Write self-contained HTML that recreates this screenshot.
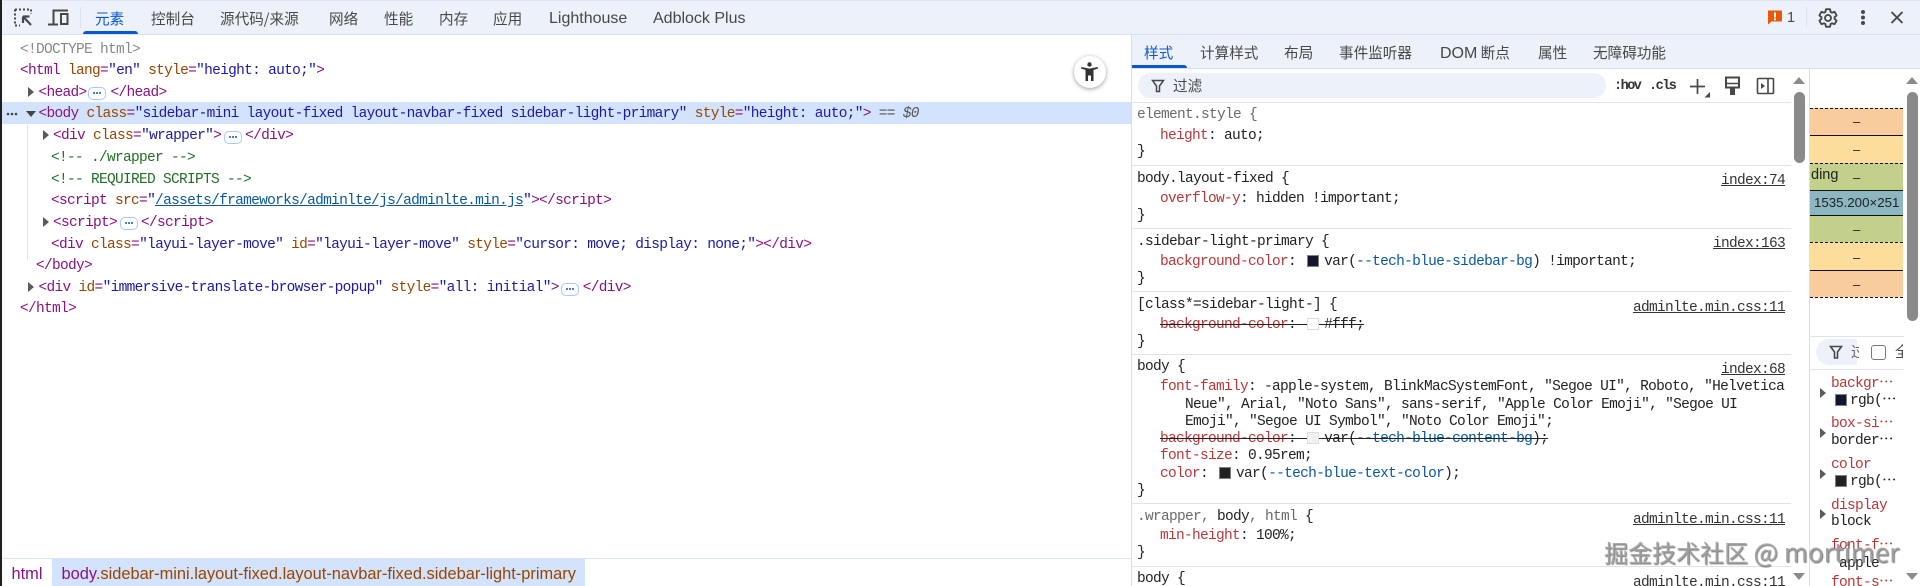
<!DOCTYPE html>
<html lang="zh"><head><meta charset="utf-8"><title>DevTools</title>
<style>
html,body{margin:0;padding:0;background:#fff;width:1920px;height:586px;overflow:hidden}
#r{position:relative;width:1920px;height:586px;overflow:hidden;background:#fff}
.l,.u{position:absolute;white-space:pre;line-height:20px;height:20px;font-family:"Liberation Mono","Noto Sans CJK SC",monospace;font-size:14.5px;letter-spacing:-.7px;color:#222;margin-top:1.5px}
.u{margin-top:1px}
.s{position:absolute;white-space:pre;line-height:20px;height:20px;font-family:"Noto Sans CJK SC","Liberation Sans",sans-serif;font-size:14.6px;color:#474747}
.b{position:absolute}
.t{color:#881280}.a{color:#994500}.v{color:#1a1aa6}.c{color:#236e25}
.p{color:#b8383a}.g{color:#6a6a6a}.n{color:#0b57a0}
.u{text-decoration:underline;color:#333;text-align:right}
.dl{position:absolute;width:16px;height:11px;border:1px solid #a8c7fa;border-radius:5px;background:#fff}
.dl:after{content:"";position:absolute;left:4px;top:4px;width:2px;height:2px;background:#1a56b0;border-radius:50%;box-shadow:3px 0 0 #1a56b0,6px 0 0 #1a56b0}
.ar{position:absolute;width:0;height:0;border-left:6px solid #5a5a5a;border-top:5px solid transparent;border-bottom:5px solid transparent}
.sw{position:absolute;width:10px;height:10px;border:1px solid #808080}
.h{position:absolute;left:1132px;width:659px;height:1px;background:#dde3f2}
.bx{position:absolute;left:1810px;width:93px}
.dash{position:absolute;left:1810px;width:93px;height:0;border-top:1px dashed #111}
.sol{position:absolute;left:1810px;width:93px;height:1px;background:#111}
.m{position:absolute;left:1853px;white-space:pre;font:13px/16px "Liberation Sans",sans-serif;color:#222}
.i{position:absolute;overflow:visible}
.e{letter-spacing:3.3px}
.ls{font-family:"Liberation Sans",sans-serif;font-size:16px}
</style></head><body><div id="r">

<!-- toolbar -->
<div class="b" style="left:0;top:0;width:1920px;height:34px;background:#edf2fa"></div>
<div class="b" style="left:0;top:0;width:1920px;height:1px;background:#dfe5f2"></div>
<div class="b" style="left:0;top:34px;width:1920px;height:1px;background:#d6dfee"></div>
<div class="b" style="left:80px;top:7px;width:1px;height:21px;background:#dde3ee"></div>
<div class="b" style="left:1806px;top:7px;width:1px;height:21px;background:#dde3ee"></div>

<svg class="i" style="left:0;top:0" width="90" height="34" fill="none" stroke="#474747">
<path d="M15 9.5H31M15 9.5V25.5H20M31 9.5V14" stroke-width="2" stroke-dasharray="2 2"/>
<path d="M23 16.5H29.5M23 16.5V23M23.5 17L31 25" stroke-width="2.2"/>
<path d="M53.5 24V10.5H68" stroke-width="2"/><path d="M48 24.5H58" stroke-width="2"/>
<rect x="61" y="14" width="6.5" height="10" stroke-width="2"/>
</svg>

<div class="s" style="left:95px;top:9px;color:#0b57d0">元素</div>
<div class="b" style="left:83px;top:31px;width:55px;height:3px;background:#0b57d0;border-radius:3px 3px 0 0"></div>
<div class="s" style="left:151px;top:9px">控制台</div>
<div class="s" style="left:220px;top:9px">源代码/来源</div>
<div class="s" style="left:329px;top:9px">网络</div>
<div class="s" style="left:384px;top:9px">性能</div>
<div class="s" style="left:439px;top:9px">内存</div>
<div class="s" style="left:493px;top:9px">应用</div>
<div class="s ls" style="left:549px;top:9px">Lighthouse</div>
<div class="s ls" style="left:653px;top:9px">Adblock Plus</div>

<svg class="i" style="left:1760px;top:0" width="160" height="34" fill="none">
<path d="M8 10.5H22V21.5H11.5L8 24.5Z" fill="#e8590c"/>
<rect x="14" y="12.5" width="2" height="5" fill="#fff"/><rect x="14" y="18.5" width="2" height="1.8" fill="#fff"/>
</svg>
<div class="s" style="left:1787px;top:8px;font-family:'Liberation Sans',sans-serif;font-size:14.5px">1</div>
<svg class="i" style="left:1817px;top:6.5px" width="22" height="22" viewBox="0 0 24 24" fill="none" stroke="#474747" stroke-width="2"><path d="M19.14 12.94c.04-.3.06-.61.06-.94 0-.32-.02-.64-.07-.94l2.03-1.58a.49.49 0 0 0 .12-.61l-1.92-3.32a.488.488 0 0 0-.59-.22l-2.39.96c-.5-.38-1.03-.7-1.62-.94l-.36-2.54a.484.484 0 0 0-.48-.41h-3.84c-.24 0-.43.17-.47.41l-.36 2.54c-.59.24-1.13.57-1.62.94l-2.39-.96c-.22-.08-.47 0-.59.22L2.74 8.87c-.12.21-.08.47.12.61l2.03 1.58c-.05.3-.09.63-.09.94s.02.64.07.94l-2.03 1.58a.49.49 0 0 0-.12.61l1.92 3.32c.12.22.37.29.59.22l2.39-.96c.5.38 1.03.7 1.62.94l.36 2.54c.05.24.24.41.48.41h3.84c.24 0 .44-.17.47-.41l.36-2.54c.59-.24 1.13-.56 1.62-.94l2.39.96c.22.08.47 0 .59-.22l1.92-3.32c.12-.22.07-.47-.12-.61l-2.01-1.58z"/><circle cx="12" cy="12" r="3.3"/></svg>
<svg class="i" style="left:1855px;top:5px" width="55" height="26" fill="#474747" stroke="#474747">
<circle cx="8" cy="7" r="2" stroke="none"/><circle cx="8" cy="12.5" r="2" stroke="none"/><circle cx="8" cy="18" r="2" stroke="none"/>
<path d="M36.5 7L47.5 18M47.5 7L36.5 18" stroke-width="1.9" fill="none"/>
</svg>

<!-- DOM panel -->
<div class="b" style="left:2px;top:102px;width:1129px;height:22px;background:#d3e3fd"></div>
<div class="b" style="left:27px;top:125px;width:1px;height:135px;background:#e4e4e4"></div>

<div class="l" style="left:20px;top:38px;color:#888">&lt;!DOCTYPE html&gt;</div>
<div class="l" style="left:20px;top:59px"><span class="t">&lt;html</span> <span class="a">lang</span><span class="t">=</span><span class="v">"en"</span> <span class="a">style</span><span class="t">=</span><span class="v">"height: auto;"</span><span class="t">&gt;</span></div>
<div class="ar" style="left:28px;top:87px"></div>
<div class="l" style="left:38.5px;top:81px"><span class="t">&lt;head&gt;</span>  <span class="t"> &lt;/head&gt;</span></div>
<div class="dl" style="left:88px;top:87px"></div>

<svg class="i" style="left:6px;top:110px" width="32" height="10" fill="#444"><circle cx="2" cy="4" r="1.3"/><circle cx="6" cy="4" r="1.3"/><circle cx="10" cy="4" r="1.3"/><path d="M20 1H30L25 7Z" fill="#444"/></svg>
<div class="l" style="left:38.5px;top:102.5px"><span class="t">&lt;body</span> <span class="a">class</span><span class="t">=</span><span class="v">"sidebar-mini layout-fixed layout-navbar-fixed sidebar-light-primary"</span> <span class="a">style</span><span class="t">=</span><span class="v">"height: auto;"</span><span class="t">&gt;</span> <span style="color:#555;font-style:italic">== $0</span></div>

<div class="ar" style="left:43px;top:130px"></div>
<div class="l" style="left:53px;top:124.5px"><span class="t">&lt;div</span> <span class="a">class</span><span class="t">=</span><span class="v">"wrapper"</span><span class="t">&gt;</span>   <span class="t">&lt;/div&gt;</span></div>
<div class="dl" style="left:224px;top:131px"></div>
<div class="l c" style="left:51px;top:146px">&lt;!-- ./wrapper --&gt;</div>
<div class="l c" style="left:51px;top:168px">&lt;!-- REQUIRED SCRIPTS --&gt;</div>
<div class="l" style="left:51px;top:189.5px"><span class="t">&lt;script</span> <span class="a">src</span><span class="t">=</span><span class="v">"</span><span style="color:#0b57a0;text-decoration:underline">/assets/frameworks/adminlte/js/adminlte.min.js</span><span class="v">"</span><span class="t">&gt;&lt;/script&gt;</span></div>
<div class="ar" style="left:43px;top:217px"></div>
<div class="l" style="left:53px;top:211px"><span class="t">&lt;script&gt;</span>   <span class="t">&lt;/script&gt;</span></div>
<div class="dl" style="left:120px;top:217px"></div>
<div class="l" style="left:51px;top:233px"><span class="t">&lt;div</span> <span class="a">class</span><span class="t">=</span><span class="v">"layui-layer-move"</span> <span class="a">id</span><span class="t">=</span><span class="v">"layui-layer-move"</span> <span class="a">style</span><span class="t">=</span><span class="v">"cursor: move; display: none;"</span><span class="t">&gt;&lt;/div&gt;</span></div>
<div class="l t" style="left:36px;top:254.5px">&lt;/body&gt;</div>
<div class="ar" style="left:28px;top:282px"></div>
<div class="l" style="left:38.5px;top:276px"><span class="t">&lt;div</span> <span class="a">id</span><span class="t">=</span><span class="v">"immersive-translate-browser-popup"</span> <span class="a">style</span><span class="t">=</span><span class="v">"all: initial"</span><span class="t">&gt;</span>   <span class="t">&lt;/div&gt;</span></div>
<div class="dl" style="left:561px;top:283px"></div>
<div class="l t" style="left:20px;top:297.5px">&lt;/html&gt;</div>

<!-- accessibility button -->
<div class="b" style="left:1074px;top:56px;width:32px;height:32px;border-radius:50%;background:#fff;box-shadow:0 1px 4px rgba(0,0,0,.4)"></div>
<svg class="i" style="left:1074px;top:56px" width="32" height="32" fill="#333"><circle cx="15.5" cy="8.5" r="2.2"/><path d="M7 12.5L7.4 11L15.5 12.6L23.6 11L24 12.5L19.5 14V25H17V19.5H14V25H11.5V14Z"/></svg>

<!-- breadcrumbs -->
<div class="b" style="left:2px;top:558px;width:1129px;height:1px;background:#dbe2f1"></div>
<div class="b" style="left:52px;top:559px;width:533px;height:27px;background:#d3e3fd"></div>
<div class="s" style="left:11.5px;top:564px;font-family:'Liberation Sans',sans-serif;font-size:16.4px;color:#881280">html</div>
<div class="s" style="left:61.5px;top:564px;font-family:'Liberation Sans',sans-serif;font-size:16.4px;color:#994500"><span class="t">body</span>.sidebar-mini.layout-fixed.layout-navbar-fixed.sidebar-light-primary</div>

<!-- sidebar divider -->
<div class="b" style="left:1131px;top:35px;width:1px;height:551px;background:#d6dfee"></div>
<div class="b" style="left:1132px;top:35px;width:788px;height:33px;background:#edf2fa"></div>
<div class="b" style="left:1132px;top:68px;width:788px;height:1px;background:#d6dfee"></div>
<div class="s" style="left:1144px;top:43px;color:#0b57d0">样式</div>
<div class="b" style="left:1132px;top:65px;width:55px;height:3px;background:#0b57d0;border-radius:0 3px 0 0"></div>
<div class="s" style="left:1200px;top:43px">计算样式</div>
<div class="s" style="left:1284px;top:43px">布局</div>
<div class="s" style="left:1339px;top:43px">事件监听器</div>
<div class="s" style="left:1440px;top:43px"><span class="ls">DOM</span> 断点</div>
<div class="s" style="left:1538px;top:43px">属性</div>
<div class="s" style="left:1593px;top:43px">无障碍功能</div>

<!-- filter bar -->
<div class="b" style="left:1138px;top:73px;width:468px;height:25px;border-radius:13px;background:#edf2fa"></div>
<svg class="i" style="left:1150px;top:78px" width="16" height="16" fill="none" stroke="#474747" stroke-width="1.5"><path d="M2.5 2.5H13.5L9.5 8V13.5H6.5V8Z"/></svg>
<div class="s" style="left:1173px;top:76px">过滤</div>
<div class="s" style="left:1614px;top:77px;font-family:'Liberation Mono',monospace;font-size:13.5px;font-weight:bold;letter-spacing:-1.5px;color:#333">:hov</div>
<div class="s" style="left:1649px;top:77px;font-family:'Liberation Mono',monospace;font-size:13.5px;font-weight:bold;letter-spacing:-1.5px;color:#333">.cls</div>
<svg class="i" style="left:1680px;top:70px" width="110" height="32" fill="none" stroke="#474747">
<path d="M17.5 9V24M10 16.5H25" stroke-width="1.7"/>
<path d="M30 22V27.5H24.5Z" fill="#474747" stroke="none"/>
<path d="M46 7.5H59V17.5H46Z" stroke-width="2"/><path d="M46 13.5H59" stroke-width="1.5"/>
<rect x="50" y="17" width="5" height="8" fill="#474747" stroke="none"/>
<rect x="77.5" y="8.5" width="16" height="15" rx="1" stroke-width="1.6"/>
<path d="M88 8.5V23.5" stroke-width="1.6"/><path d="M81 13L85 16L81 19Z" fill="#474747" stroke="none"/>
</svg>

<!-- styles scrollbar -->
<div class="b" style="left:1793px;top:77px;width:0;height:0;border-left:6.5px solid transparent;border-right:6.5px solid transparent;border-bottom:7px solid #8a8a8a"></div>
<div class="b" style="left:1794px;top:92px;width:11px;height:71px;border-radius:6px;background:#8a8a8a"></div>
<div class="b" style="left:1793px;top:573px;width:0;height:0;border-left:6.5px solid transparent;border-right:6.5px solid transparent;border-top:7px solid #8a8a8a"></div>

<!-- styles rules -->
<div class="h" style="top:102px"></div>
<div class="l g" style="left:1137px;top:103px">element.style {</div>
<div class="l" style="left:1160px;top:124px"><span class="p">height</span>: auto;</div>
<div class="l" style="left:1137px;top:140px">}</div>
<div class="h" style="top:165px"></div>
<div class="l" style="left:1137px;top:167px">body.layout-fixed {</div>
<div class="u" style="right:135px;top:170px">index:74</div>
<div class="l" style="left:1160px;top:187px"><span class="p">overflow-y</span>: hidden !important;</div>
<div class="l" style="left:1137px;top:204px">}</div>
<div class="h" style="top:228px"></div>
<div class="l" style="left:1137px;top:230px">.sidebar-light-primary {</div>
<div class="u" style="right:135px;top:233px">index:163</div>
<div class="l" style="left:1160px;top:250px"><span class="p">background-color</span>:  <span class="e"> </span>var(<span class="n">--tech-blue-sidebar-bg</span>) !important;</div>
<div class="sw" style="left:1307px;top:255px;background:#12162e"></div>
<div class="l" style="left:1137px;top:267px">}</div>
<div class="h" style="top:291px"></div>
<div class="l" style="left:1137px;top:293px">[class*=sidebar-light-] {</div>
<div class="u" style="right:135px;top:297px">adminlte.min.css:11</div>
<div class="l" style="left:1160px;top:313px;text-decoration:line-through"><span class="p">background-color</span>:  <span class="e"> </span>#fff;</div>
<div class="sw" style="left:1307px;top:318px;background:#fff;border-color:#ddd"></div>
<div class="l" style="left:1137px;top:330px">}</div>
<div class="h" style="top:354px"></div>
<div class="l" style="left:1137px;top:355px">body {</div>
<div class="u" style="right:135px;top:359px">index:68</div>
<div class="l" style="left:1160px;top:375px"><span class="p">font-family</span>: -apple-system, BlinkMacSystemFont, "Segoe UI", Roboto, "Helvetica</div>
<div class="l" style="left:1185px;top:393px">Neue", Arial, "Noto Sans", sans-serif, "Apple Color Emoji", "Segoe UI</div>
<div class="l" style="left:1185px;top:410px">Emoji", "Segoe UI Symbol", "Noto Color Emoji";</div>
<div class="l" style="left:1160px;top:427px;text-decoration:line-through"><span class="p">background-color</span>:  <span class="e"> </span>var(<span class="n">--tech-blue-content-bg</span>);</div>
<div class="sw" style="left:1307px;top:432px;background:#f1f1f1;border-color:#ddd"></div>
<div class="l" style="left:1160px;top:444px"><span class="p">font-size</span>: 0.95rem;</div>
<div class="l" style="left:1160px;top:462px"><span class="p">color</span>:  <span class="e"> </span>var(<span class="n">--tech-blue-text-color</span>);</div>
<div class="sw" style="left:1219px;top:467px;background:#222"></div>
<div class="l" style="left:1137px;top:479px">}</div>
<div class="h" style="top:503px"></div>
<div class="l" style="left:1137px;top:505px"><span class="g">.wrapper, </span>body<span class="g">, html</span> {</div>
<div class="u" style="right:135px;top:509px">adminlte.min.css:11</div>
<div class="l" style="left:1160px;top:524px"><span class="p">min-height</span>: 100%;</div>
<div class="l" style="left:1137px;top:541px">}</div>
<div class="h" style="top:566px"></div>
<div class="l" style="left:1137px;top:567px">body {</div>
<div class="u" style="right:135px;top:572px">adminlte.min.css:11</div>

<!-- right column -->
<div class="b" style="left:1809px;top:69px;width:1px;height:517px;background:#d6dfee"></div>
<div class="bx" style="top:108px;background:#f9cc9d;height:27px"></div>
<div class="bx" style="top:135px;height:28px;background:#fddd9b"></div>
<div class="bx" style="top:163px;height:27px;background:#c3d08b"></div>
<div class="bx" style="top:190px;height:25px;background:#8cb6c0"></div>
<div class="bx" style="top:215px;height:27px;background:#c3d08b"></div>
<div class="bx" style="top:242px;height:28px;background:#fddd9b"></div>
<div class="bx" style="top:270px;height:27px;background:#f9cc9d"></div>
<div class="dash" style="top:108px"></div><div class="sol" style="top:135px"></div>
<div class="dash" style="top:163px"></div><div class="sol" style="top:190px"></div>
<div class="sol" style="top:215px"></div><div class="dash" style="top:242px"></div>
<div class="sol" style="top:270px"></div><div class="dash" style="top:297px"></div>
<div class="m" style="top:114px">–</div>
<div class="m" style="top:142px">–</div>
<div class="m" style="top:170px">–</div>
<div class="m" style="left:1811px;top:167px;font-size:14.5px">ding</div>
<div class="m" style="left:1814px;top:195px;font-size:13.3px">1535.200×251</div>
<div class="m" style="top:222px">–</div>
<div class="m" style="top:250px">–</div>
<div class="m" style="top:277px">–</div>

<div class="b" style="left:1906px;top:77px;width:0;height:0;border-left:6.5px solid transparent;border-right:6.5px solid transparent;border-bottom:7px solid #8a8a8a"></div>
<div class="b" style="left:1907px;top:92px;width:11px;height:229px;border-radius:6px;background:#8a8a8a"></div>
<div class="b" style="left:1906px;top:573px;width:0;height:0;border-left:6.5px solid transparent;border-right:6.5px solid transparent;border-top:7px solid #8a8a8a"></div>

<div class="b" style="left:1810px;top:336px;width:94px;height:1px;background:#dde3f2"></div>
<div class="b" style="left:1816px;top:339px;width:41px;height:26px;border-radius:13px 0 0 13px;background:#edf2fa"></div>
<svg class="i" style="left:1829px;top:345px" width="14" height="15" fill="none" stroke="#474747" stroke-width="1.6"><path d="M1.5 1.5H12.5L8.5 7V13H5.5V7Z"/></svg>
<div class="b" style="left:1851px;top:342px;width:8px;height:20px;overflow:hidden"><div class="s" style="left:0;top:0;color:#666">过</div></div>
<div class="b" style="left:1871px;top:345px;width:13px;height:13px;border:1px solid #777;border-radius:3px"></div>
<div class="b" style="left:1895px;top:342px;width:8px;height:20px;overflow:hidden"><div class="s" style="left:0;top:0">全</div></div>
<div class="b" style="left:1810px;top:369px;width:94px;height:1px;background:#dde3f2"></div>

<div class="l p" style="left:1831px;top:372px">backgr⋯</div>
<div class="ar" style="left:1820px;top:388px"></div>
<div class="sw" style="left:1835px;top:394px;background:#12162e"></div>
<div class="l" style="left:1850px;top:389px">rgb(⋯</div>
<div class="l p" style="left:1831px;top:412px">box-si⋯</div>
<div class="ar" style="left:1820px;top:428px"></div>
<div class="l" style="left:1831px;top:429px">border⋯</div>
<div class="l p" style="left:1831px;top:453px">color</div>
<div class="ar" style="left:1820px;top:469px"></div>
<div class="sw" style="left:1835px;top:475px;background:#222"></div>
<div class="l" style="left:1850px;top:470px">rgb(⋯</div>
<div class="l p" style="left:1831px;top:494px">display</div>
<div class="ar" style="left:1820px;top:509px"></div>
<div class="l" style="left:1831px;top:510px">block</div>
<div class="l p" style="left:1831px;top:534px">font-f⋯</div>
<div class="l" style="left:1839px;top:552px">apple</div>
<div class="l p" style="left:1831px;top:571px">font-s⋯</div>

<!-- watermark -->
<div class="b" style="left:1604px;top:536px;white-space:pre;font:24px/32px 'Noto Sans CJK SC','Liberation Sans',sans-serif;color:rgba(160,160,160,.88);text-shadow:1px 1px 1px rgba(70,70,70,.7)">掘金技术社区 <span style="font-size:26px">@ mortimer</span></div>

<!-- left edge -->
<div class="b" style="left:0;top:0;width:2px;height:586px;background:#1f1f1f"></div>
</div></body></html>
